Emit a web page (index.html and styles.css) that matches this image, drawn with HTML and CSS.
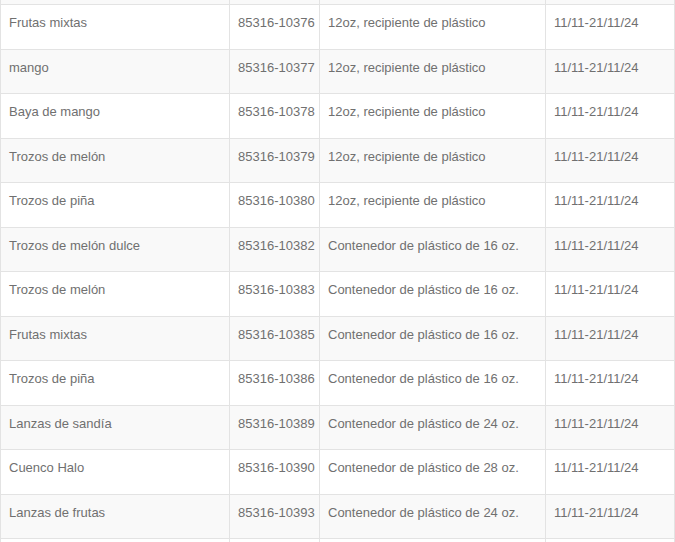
FILE: index.html
```html
<!DOCTYPE html>
<html>
<head>
  <title>Productos</title>
  <link rel="stylesheet" href="styles.css">
</head>
<body>
  <table class="products">
    <colgroup>
      <col class="col-name">
      <col class="col-code">
      <col class="col-pack">
      <col class="col-date">
    </colgroup>
    <tbody>
      <tr class="stub"><td></td><td></td><td></td><td></td></tr>
      <tr><td>Frutas mixtas</td><td>85316-10376</td><td>12oz, recipiente de plástico</td><td>11/11-21/11/24</td></tr>
      <tr><td>mango</td><td>85316-10377</td><td>12oz, recipiente de plástico</td><td>11/11-21/11/24</td></tr>
      <tr><td>Baya de mango</td><td>85316-10378</td><td>12oz, recipiente de plástico</td><td>11/11-21/11/24</td></tr>
      <tr><td>Trozos de melón</td><td>85316-10379</td><td>12oz, recipiente de plástico</td><td>11/11-21/11/24</td></tr>
      <tr><td>Trozos de piña</td><td>85316-10380</td><td>12oz, recipiente de plástico</td><td>11/11-21/11/24</td></tr>
      <tr><td>Trozos de melón dulce</td><td>85316-10382</td><td>Contenedor de plástico de 16 oz.</td><td>11/11-21/11/24</td></tr>
      <tr><td>Trozos de melón</td><td>85316-10383</td><td>Contenedor de plástico de 16 oz.</td><td>11/11-21/11/24</td></tr>
      <tr><td>Frutas mixtas</td><td>85316-10385</td><td>Contenedor de plástico de 16 oz.</td><td>11/11-21/11/24</td></tr>
      <tr><td>Trozos de piña</td><td>85316-10386</td><td>Contenedor de plástico de 16 oz.</td><td>11/11-21/11/24</td></tr>
      <tr><td>Lanzas de sandía</td><td>85316-10389</td><td>Contenedor de plástico de 24 oz.</td><td>11/11-21/11/24</td></tr>
      <tr><td>Cuenco Halo</td><td>85316-10390</td><td>Contenedor de plástico de 28 oz.</td><td>11/11-21/11/24</td></tr>
      <tr><td>Lanzas de frutas</td><td>85316-10393</td><td>Contenedor de plástico de 24 oz.</td><td>11/11-21/11/24</td></tr>
      <tr class="stub"><td></td><td></td><td></td><td></td></tr>
    </tbody>
  </table>
</body>
</html>
```

FILE: styles.css
```css
body {
  margin: 0;
  padding: 0;
  background-color: white;
  font-family: "Liberation Sans", Arial, sans-serif;
  overflow: hidden;
}

.products {
  width: 675px;
  margin-top: -40.5px; /* la fila anterior queda cortada arriba */
  border-collapse: collapse;
  table-layout: fixed;
}

.col-name {
  width: 229px;
}

.col-code {
  width: 90px;
}

.col-pack {
  width: 226px;
}

.products td {
  border: 1px solid #e3e3e3;
  padding: 9px 8px 16px;
  font-size: 13px;
  line-height: 18.5px;
  color: #707070;
  white-space: nowrap;
  vertical-align: top;
}

.products tr:nth-child(odd) td {
  background-color: #f9f9f9;
}

.products .stub td {
  height: 18.5px;
}
```
